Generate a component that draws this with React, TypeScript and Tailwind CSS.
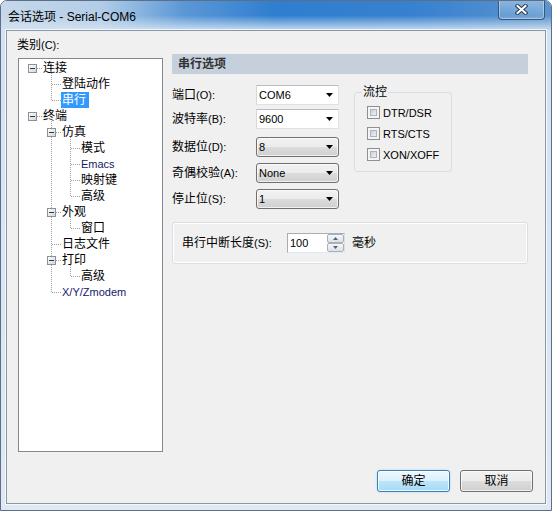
import React from "react";

type TreeNode = { t: string; lv: number; latin?: boolean; sel?: boolean };

const nodes: TreeNode[] = [
  { t: "连接", lv: 0 },
  { t: "登陆动作", lv: 1 },
  { t: "串行", lv: 1, sel: true },
  { t: "终端", lv: 0 },
  { t: "仿真", lv: 1 },
  { t: "模式", lv: 2 },
  { t: "Emacs", lv: 2, latin: true },
  { t: "映射键", lv: 2 },
  { t: "高级", lv: 2 },
  { t: "外观", lv: 1 },
  { t: "窗口", lv: 2 },
  { t: "日志文件", lv: 1 },
  { t: "打印", lv: 1 },
  { t: "高级", lv: 2 },
  { t: "X/Y/Zmodem", lv: 1, latin: true },
];

const indent = ["pl-[24px]", "pl-[43px]", "pl-[62px]"];

const L = ({ children }: { children: React.ReactNode }) => (
  <span className="text-[11px]">{children}</span>
);

// dotted connector lines + expand boxes, drawn in window coordinates
const TreeLines = () => {
  const cy = (i: number) => 68 + 16 * i;
  const h: [number, number, number][] = [
    [37, 41, cy(0)],
    [37, 41, cy(3)],
    [52, 60, cy(1)],
    [52, 60, cy(2)],
    [56, 60, cy(4)],
    [56, 60, cy(9)],
    [52, 60, cy(11)],
    [56, 60, cy(12)],
    [52, 60, cy(14)],
    [71, 79, cy(5)],
    [71, 79, cy(6)],
    [71, 79, cy(7)],
    [71, 79, cy(8)],
    [71, 79, cy(10)],
    [71, 79, cy(13)],
  ];
  const v: [number, number, number][] = [
    [51, 73, cy(2)],
    [51, 121, cy(14)],
    [70, 137, cy(8)],
    [70, 217, cy(10)],
    [70, 265, cy(13)],
  ];
  const boxes: [number, number][] = [
    [28, cy(0)],
    [28, cy(3)],
    [47, cy(4)],
    [47, cy(9)],
    [47, cy(12)],
  ];
  return (
    <svg className="absolute inset-0" width="143" height="392" shapeRendering="crispEdges">
      <defs>
        <linearGradient id="bx" x1="0" y1="0" x2="1" y2="1">
          <stop offset="0" stopColor="#ffffff" />
          <stop offset="1" stopColor="#d4d4d4" />
        </linearGradient>
      </defs>
      <g transform="translate(-19,-59)" stroke="#a0a0a0" strokeDasharray="1 1">
        {h.map(([x1, x2, y], i) => (
          <line key={"h" + i} x1={x1} y1={y + 0.5} x2={x2 + 1} y2={y + 0.5} />
        ))}
        {v.map(([x, y1, y2], i) => (
          <line key={"v" + i} x1={x + 0.5} y1={y1} x2={x + 0.5} y2={y2 + 1} />
        ))}
      </g>
      <g transform="translate(-19,-59)">
        {boxes.map(([x, y], i) => (
          <g key={"b" + i}>
            <rect x={x + 0.5} y={y - 4 + 0.5} width="8" height="8" fill="url(#bx)" stroke="#8e8f8f" />
            <line x1={x + 2} y1={y + 0.5} x2={x + 7} y2={y + 0.5} stroke="#1f3a60" />
          </g>
        ))}
      </g>
    </svg>
  );
};

const Arrow = () => (
  <svg width="7" height="4" viewBox="0 0 7 4">
    <polygon points="0,0 7,0 3.5,4" fill="#000" />
  </svg>
);

const Combo = ({ value, edit }: { value: string; edit?: boolean }) => (
  <div
    className={
      edit
        ? "w-[83px] h-[20px] flex items-center pl-[2px] pr-[5px] bg-white border border-[#dfe1e5] border-t-[#b9bcc2] border-l-[#d5d7dc]"
        : "w-[83px] h-[20px] flex items-center pl-[2px] pr-[5px] rounded-[3px] border border-[#707070] bg-[linear-gradient(180deg,#f2f2f2_0%,#ebebeb_50%,#dddddd_50%,#cfcfcf_100%)] shadow-[inset_0_0_0_1px_rgba(255,255,255,0.7)]"
    }
  >
    <span className="text-[11px] flex-1">{value}</span>
    <Arrow />
  </div>
);

const Check = ({ label }: { label: string }) => (
  <div className="flex items-center h-[13px]">
    <div className="w-[13px] h-[13px] border border-[#8e8f8f] bg-[#f4f4f4] p-[2px]">
      <div className="w-full h-full border border-[#b0b4ba] bg-[linear-gradient(135deg,#cdd1d6,#eeeff0)]" />
    </div>
    <span className="ml-[3px] text-[11px]">{label}</span>
  </div>
);

const SpinBtn = ({ up }: { up?: boolean }) => (
  <div className="h-[9px] flex items-center justify-center rounded-[2px] border border-[#a9b0b8] bg-[linear-gradient(180deg,#f6f7f8,#dde1e6)]">
    <svg width="5" height="3" viewBox="0 0 5 3">
      <polygon points={up ? "0,3 5,3 2.5,0" : "0,0 5,0 2.5,3"} fill="#4c6388" />
    </svg>
  </div>
);

const rows: { label: React.ReactNode; value: string; edit?: boolean; mt: string }[] = [
  { label: <>端口<L>(O):</L></>, value: "COM6", edit: true, mt: "mt-0" },
  { label: <>波特率<L>(B):</L></>, value: "9600", edit: true, mt: "mt-[4px]" },
  { label: <>数据位<L>(D):</L></>, value: "8", mt: "mt-[8px]" },
  { label: <>奇偶校验<L>(A):</L></>, value: "None", mt: "mt-[6px]" },
  { label: <>停止位<L>(S):</L></>, value: "1", mt: "mt-[6px]" },
];

export default function App() {
  return (
    <div className="w-[552px] h-[511px] font-['Liberation_Sans','Noto_Sans_CJK_SC',sans-serif] text-[12px] leading-[14px] text-black">
      <div className="w-full h-full flex flex-col border border-[#5d6f86] rounded-t-[7px] bg-[linear-gradient(180deg,#d2e2f2,#e0e9f3)] px-[5px] pb-[6px] overflow-hidden">
        {/* title bar */}
        <div className="-mx-[5px] h-[29px] shrink-0 bg-[linear-gradient(90deg,#c6d8ea_0%,#b3cde7_18%,#5c98d6_33%,#2f7ecf_50%,#3781cf_75%,#5b95cf_100%)]">
          <div className="h-full flex items-start px-[5px] bg-[linear-gradient(180deg,rgba(255,255,255,0)_50%,rgba(212,227,242,0.9)_100%)]">
            <span className="mt-[9px] ml-[2px] text-[12px] leading-[14px]">会话选项 - Serial-COM6</span>
            <div className="ml-auto -mt-[1px] mr-[1px] w-[47px] h-[20px] flex items-center justify-center rounded-b-[4px] border border-t-0 border-[#3a5778] bg-[linear-gradient(180deg,rgba(255,255,255,0.35),rgba(255,255,255,0.08))] shadow-[inset_0_0_0_1px_rgba(255,255,255,0.35)]">
              <svg width="13" height="11" viewBox="0 0 13 11">
                <path d="M2.5 2 L10.5 9 M10.5 2 L2.5 9" stroke="#2c3e55" strokeWidth="4" strokeLinecap="square" />
                <path d="M2.5 2 L10.5 9 M10.5 2 L2.5 9" stroke="#ffffff" strokeWidth="2" strokeLinecap="square" />
              </svg>
            </div>
          </div>
        </div>

        {/* client area */}
        <div className="h-[474px] shrink-0 border border-[#8a98a8] bg-[#f0f0f0] flex flex-col shadow-[0_0_0_1px_rgba(255,255,255,0.7)]">
          <div className="h-[421px] flex">
            {/* category tree */}
            <div className="pl-[10px] pt-[7px] flex flex-col">
              <span>类别<L>(C):</L></span>
              <div className="relative mt-[6px] ml-[1px] w-[145px] h-[394px] border border-[#828790] bg-white pt-[1px]">
                <TreeLines />
                {nodes.map((n, i) => (
                  <div key={i} className={`relative h-[16px] flex items-center ${n.sel ? "pl-[42px]" : indent[n.lv]}`}>
                    {n.sel ? (
                      <span className="h-[16px] flex items-center pl-[1px] pr-[3px] bg-[#3399ff] text-white">{n.t}</span>
                    ) : n.latin ? (
                      <span className="text-[11px] text-[#15206a]">{n.t}</span>
                    ) : (
                      <span>{n.t}</span>
                    )}
                  </div>
                ))}
              </div>
            </div>

            {/* serial options */}
            <div className="ml-[9px] pt-[23px] w-[356px] flex flex-col">
              <div className="h-[20px] flex items-center pl-[6px] bg-[#c5d0dc] font-bold text-[#333]">串行选项</div>
              <div className="flex items-start">
                <div className="mt-[11px] flex flex-col">
                  {rows.map((r, i) => (
                    <div key={i} className={`flex items-center h-[20px] ${r.mt}`}>
                      <span className="w-[84px]">{r.label}</span>
                      <Combo value={r.value} edit={r.edit} />
                    </div>
                  ))}
                </div>
                <fieldset className="mt-[11px] ml-[15px] w-[98px] border border-[#d5dfe5] rounded-[3px] pl-[12px] pt-[7px] pb-[10px] flex flex-col gap-[8px]">
                  <legend className="ml-[-5px] px-[1px] leading-[14px]">流控</legend>
                  <Check label="DTR/DSR" />
                  <Check label="RTS/CTS" />
                  <Check label="XON/XOFF" />
                </fieldset>
              </div>
              <div className="mt-[13px] h-[42px] rounded-[3px] border border-[#d5dfe5] shadow-[inset_0_0_0_1px_#ffffff] flex items-center pl-[9px]">
                <span className="w-[105px]">串行中断长度<L>(S):</L></span>
                <div className="w-[58px] h-[20px] flex bg-white border border-[#abadb3] border-b-[#e3e9ef] border-r-[#dbdfe6]">
                  <span className="flex-1 flex items-center pl-[2px] text-[11px]">100</span>
                  <div className="w-[17px] flex flex-col">
                    <SpinBtn up />
                    <SpinBtn />
                  </div>
                </div>
                <span className="ml-[7px]">毫秒</span>
              </div>
            </div>
          </div>

          {/* buttons */}
          <div className="mt-[18px] flex justify-end gap-[10px] pr-[12px]">
            <div className="w-[73px] h-[22px] flex items-center justify-center rounded-[3px] border border-[#3c7fb1] bg-[linear-gradient(180deg,#ecf7fd_0%,#dcf0fc_50%,#bde5fa_50%,#a8daf5_100%)] shadow-[inset_0_0_0_1px_rgba(255,255,255,0.8),0_0_2px_#9fd3f3]">
              确定
            </div>
            <div className="w-[73px] h-[22px] flex items-center justify-center rounded-[3px] border border-[#707070] bg-[linear-gradient(180deg,#f2f2f2_0%,#ebebeb_50%,#dddddd_50%,#cfcfcf_100%)] shadow-[inset_0_0_0_1px_rgba(255,255,255,0.7)]">
              取消
            </div>
          </div>
        </div>
      </div>
    </div>
  );
}
